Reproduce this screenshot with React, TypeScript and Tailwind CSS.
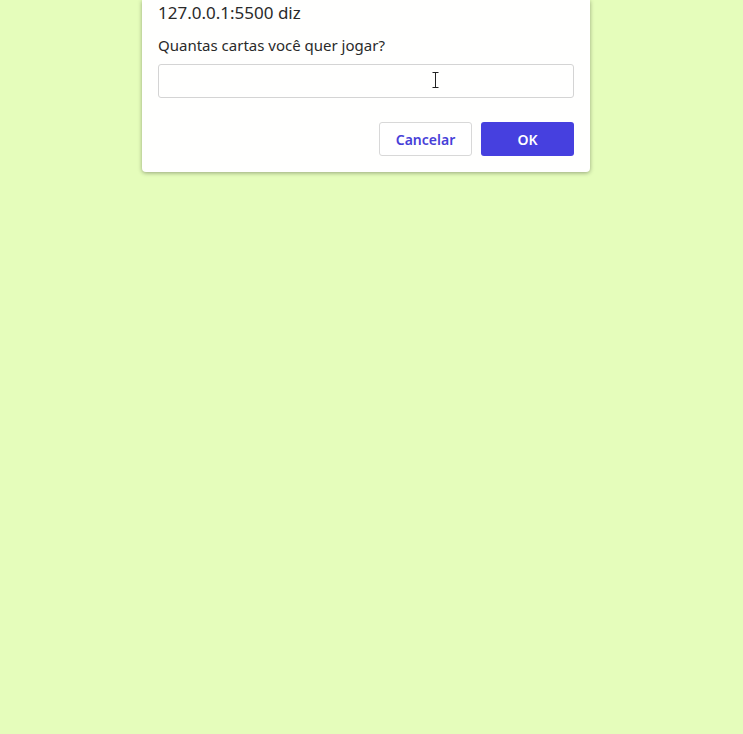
const App = () => {
  return (
    <div className="min-h-screen w-full bg-[#e5fdbb] font-['Noto_Sans',sans-serif]">
      <div className="ml-[142px] w-[448px] rounded-b-[4px] bg-[#fffffe] px-4 pb-4 shadow-[0_1px_4px_rgba(0,0,0,0.35)]">
        <div className="pt-[2px] text-[17px] leading-[22px] text-[#2a2a2a]">127.0.0.1:5500 diz</div>
        <div className="mt-[11px] text-[15px] leading-[20px] text-[#2a2a2a]">Quantas cartas você quer jogar?</div>
        <div className="relative mt-[9px]">
          <input
            type="text"
            className="block h-[34px] w-full rounded-[3px] border border-[#d4d4d4] bg-[#fffffe] px-2 text-[15px] outline-none"
          />
          <svg className="pointer-events-none absolute left-[274px] top-[8px]" width="7" height="16" viewBox="0 0 7 16">
            <path d="M0.5 0.5h6M0.5 15.5h6M3.5 0.5v15" stroke="#222" strokeWidth="1" fill="none" />
          </svg>
        </div>
        <div className="mt-[24px] flex justify-end gap-[9px]">
          <button className="h-[34px] w-[93px] rounded-[3px] border border-[#d8d8d8] bg-white text-[14px] font-semibold text-[#4740d8]">
            Cancelar
          </button>
          <button className="h-[34px] w-[93px] rounded-[3px] bg-[#4640df] text-[14px] font-semibold text-white">
            OK
          </button>
        </div>
      </div>
    </div>
  );
};

export default App;
